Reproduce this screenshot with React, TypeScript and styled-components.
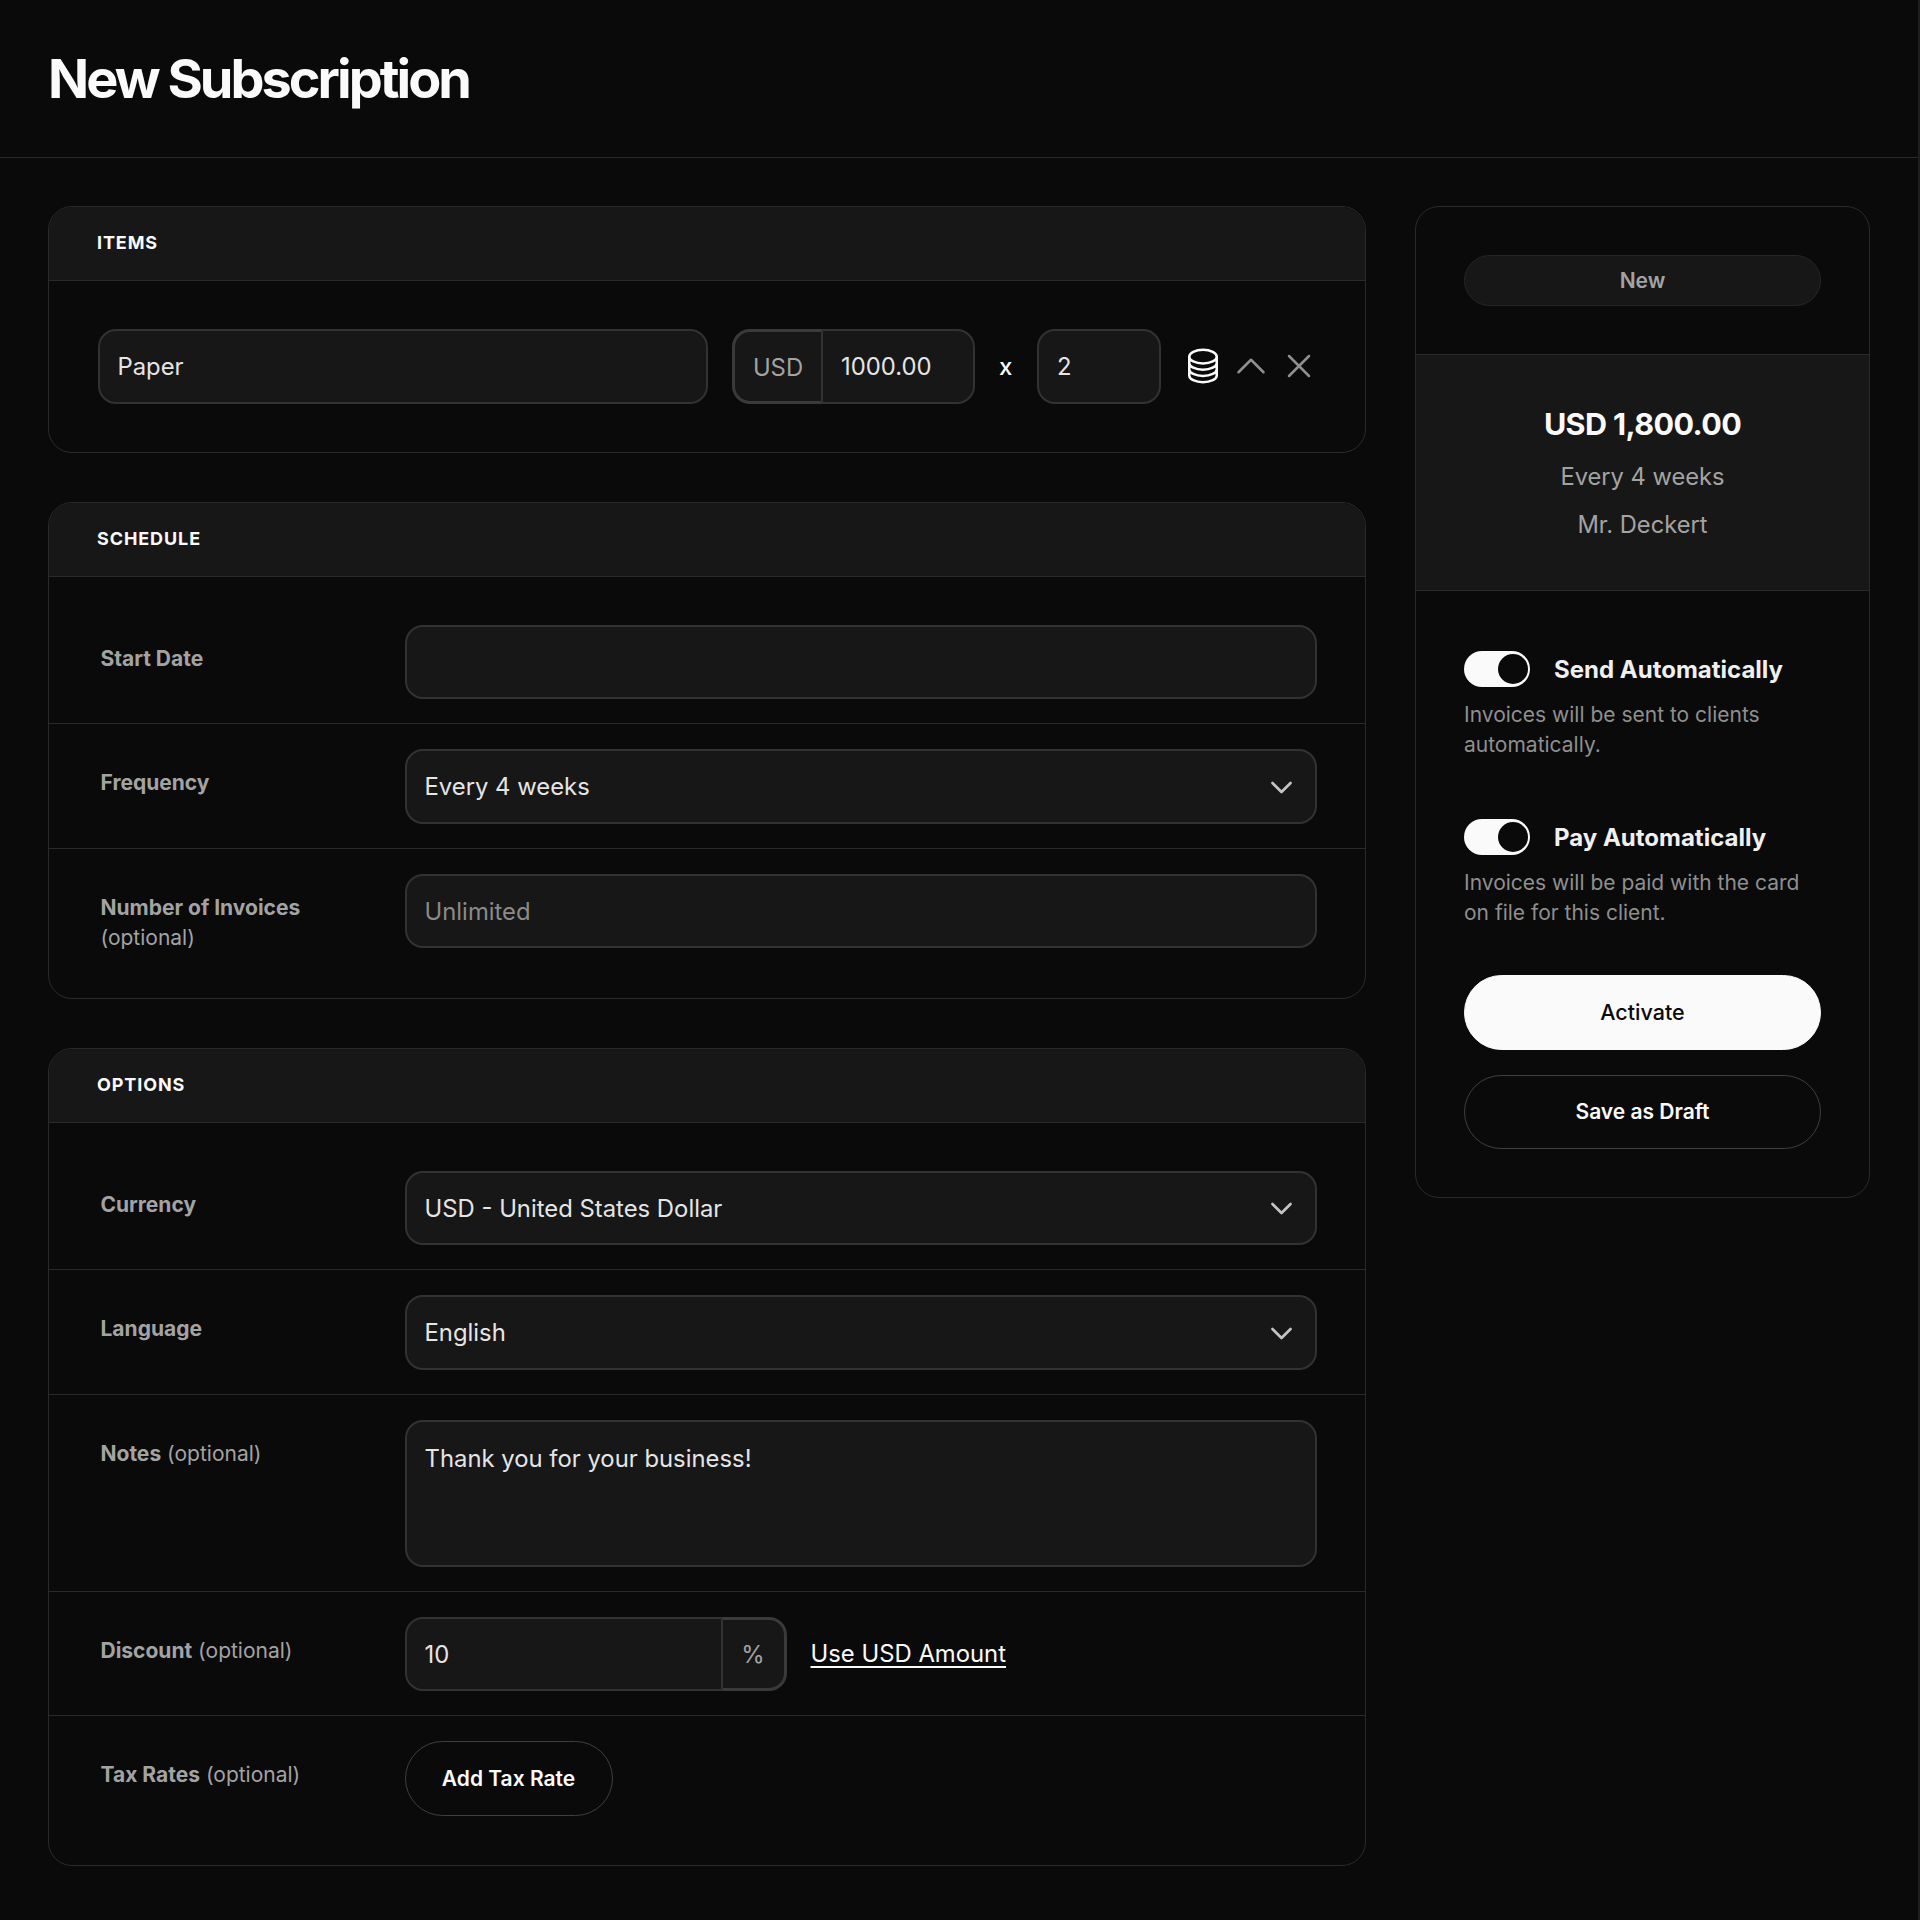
import { HiOutlineChevronDown, HiOutlineChevronUp, HiOutlineCircleStack, HiOutlineXMark } from 'react-icons/hi2';
import styled, { createGlobalStyle } from 'styled-components';

const GlobalStyle = createGlobalStyle`
  html, body {
    margin: 0;
    background: #0a0a0a;
    color: #fafafa;
    font-family: Inter, "Noto Sans", sans-serif;
  }
  * { box-sizing: border-box; }
`;

const Page = styled.div`
  min-height: 1920px;
  background: #0a0a0a;
  border-right: 2px solid #1e1e1e;
`;

const Header = styled.header`
  height: 158px;
  padding: 1px 0 0 48px;
  display: flex;
  align-items: center;
  border-bottom: 1px solid #2a2a2a;
`;

const Title = styled.h1`
  margin: 0;
  font-size: 54px;
  font-weight: 700;
  letter-spacing: -0.055em;
  line-height: 72px;
`;

const Layout = styled.div`
  display: grid;
  grid-template-columns: 1318px 455px;
  gap: 49px;
  padding: 48px 48px 48px;
  align-items: start;
`;

const Column = styled.main`
  display: flex;
  flex-direction: column;
  gap: 49px;
`;

const Card = styled.section`
  border: 1px solid #2a2a2a;
  border-radius: 24px;
  overflow: hidden;
`;

const CardHead = styled.div`
  height: 74px;
  padding: 0 0 2px 48px;
  display: flex;
  align-items: center;
  background: #171717;
  border-bottom: 1px solid #2a2a2a;
  font-size: 18px;
  font-weight: 700;
  letter-spacing: 0.05em;
`;

const ItemRow = styled.div`
  display: flex;
  align-items: center;
  gap: 24px;
  padding: 48px 48px 48px 48.5px;
`;

const Field = styled.div<{ $width?: number; $height?: number; $flat?: 'left' | 'right'; $top?: boolean }>`
  ${({ $width }) => ($width ? `width: ${$width}px; flex: none;` : 'flex: 1;')}
  height: ${({ $height }) => $height ?? 74.5}px;
  padding: ${({ $top }) => ($top ? '19px' : '1.5px')} 18px 0;
  display: flex;
  align-items: ${({ $top }) => ($top ? 'flex-start' : 'center')};
  justify-content: space-between;
  background: #171717;
  border: 2px solid #323232;
  border-radius: ${({ $flat }) =>
    $flat === 'left' ? '0 18px 18px 0' : $flat === 'right' ? '18px 0 0 18px' : '18px'};
  font-size: 23.85px;
  line-height: 36px;
  color: #e5e5e5;
`;

const Placeholder = styled.span`
  color: #8a8a8a;
`;

const Addon = styled.div<{ $side: 'left' | 'right'; $width: number }>`
  width: ${({ $width }) => $width}px;
  height: 74.5px;
  flex: none;
  padding-top: 1.5px;
  display: flex;
  align-items: center;
  justify-content: center;
  background: #171717;
  border: 3px solid #3a3a3a;
  border-${({ $side }) => ($side === 'left' ? 'right' : 'left')}: 0;
  border-radius: ${({ $side }) => ($side === 'left' ? '18px 0 0 18px' : '0 18px 18px 0')};
  font-size: 23.85px;
  color: #a3a3a3;
`;

const Group = styled.div`
  display: flex;
  flex: none;
`;

const Times = styled.span`
  font-size: 24px;
  font-weight: 500;
  width: 14px;
`;

const Icons = styled.div`
  display: flex;
  gap: 12px;
`;

const IconButton = styled.span<{ $bright?: boolean }>`
  width: 36px;
  height: 36px;
  display: flex;
  align-items: center;
  justify-content: center;
  color: ${({ $bright }) => ($bright ? '#fafafa' : '#8f8f8f')};
  font-size: 40px;
  svg {
    flex: none;
  }
`;

const SelectArrow = styled.span`
  width: 32px;
  height: 32px;
  display: flex;
  align-items: center;
  justify-content: center;
  color: #c4c4c4;
  font-size: 29px;
  svg {
    stroke-width: 2.2;
  }
`;

const Rows = styled.div`
  display: flex;
  flex-direction: column;
`;

const Row = styled.div<{ $first?: boolean; $last?: boolean }>`
  display: grid;
  grid-template-columns: 304px 1fr;
  align-items: start;
  padding: ${({ $first }) => ($first ? '48px' : '25px')} 48px ${({ $last }) => ($last ? '49.5px' : '24px')} 51.5px;
  border-bottom: ${({ $last }) => ($last ? '0' : '1px solid #2a2a2a')};
`;

const Label = styled.div`
  margin-bottom: -6px;
  padding-top: 19px;
  font-size: 21px;
  line-height: 30px;
  font-weight: 400;
  color: #a3a3a3;
  strong {
    font-weight: 700;
  }
`;

const Inline = styled.div`
  display: flex;
  align-items: center;
`;

const Link = styled.a`
  margin-left: 24px;
  font-size: 23.85px;
  line-height: 30px;
  color: #fafafa;
  text-decoration: underline;
  text-underline-offset: 4px;
`;

const GhostButton = styled.button<{ $wide?: boolean }>`
  ${({ $wide }) => ($wide ? 'width: 100%;' : 'width: 208px;')}
  height: 74.5px;
  background: transparent;
  border: 1px solid #404040;
  border-radius: 38px;
  color: #fafafa;
  font: 600 21px Inter, sans-serif;
`;

const PrimaryButton = styled(GhostButton)`
  width: 100%;
  background: #fafafa;
  border-color: #fafafa;
  color: #0a0a0a;
  font: 500 21.5px Inter, sans-serif;
`;

const Side = styled.aside`
  border: 1px solid #2a2a2a;
  border-radius: 24px;
  overflow: hidden;
`;

const StatusBar = styled.div`
  padding: 48px;
`;

const Status = styled.div`
  height: 51px;
  display: flex;
  align-items: center;
  justify-content: center;
  background: #171717;
  border: 1px solid #262626;
  border-radius: 26px;
  font-size: 21px;
  font-weight: 600;
  color: #a3a3a3;
`;

const Summary = styled.div`
  height: 237px;
  padding-top: 4.5px;
  display: flex;
  flex-direction: column;
  align-items: center;
  justify-content: center;
  background: #171717;
  border-top: 1px solid #2a2a2a;
  border-bottom: 1px solid #2a2a2a;
`;

const Amount = styled.div`
  margin-bottom: 5px;
  font-size: 30.5px;
  font-weight: 700;
  line-height: 48px;
  letter-spacing: -0.02em;
`;

const SummaryLine = styled.div`
  font-size: 23.7px;
  line-height: 48px;
  color: #a3a3a3;
`;

const Controls = styled.div`
  padding: 48px;
  display: flex;
  flex-direction: column;
`;

const Setting = styled.div`
  margin-bottom: 47px;
`;

const SettingHead = styled.div`
  height: 60px;
  display: flex;
  align-items: center;
  gap: 24px;
  font-size: 24px;
  font-weight: 700;
  color: #f0f0f0;
`;

const Toggle = styled.span`
  width: 66px;
  height: 36px;
  padding: 3px 2px 3px 3px;
  display: flex;
  justify-content: flex-end;
  background: #fafafa;
  border-radius: 18px;
`;

const Knob = styled.span`
  width: 30px;
  height: 30px;
  background: #0a0a0a;
  border-radius: 50%;
`;

const Hint = styled.p`
  margin: 0;
  padding-top: 1px;
  font-size: 21px;
  line-height: 30px;
  color: #8f8f8f;
`;

const Gap = styled.div`
  height: 25px;
`;

function Chevron() {
  return (
    <SelectArrow>
      <HiOutlineChevronDown />
    </SelectArrow>
  );
}

export default function App() {
  return (
    <Page>
      <GlobalStyle />
      <Header>
        <Title>New Subscription</Title>
      </Header>
      <Layout>
        <Column>
          <Card>
            <CardHead>ITEMS</CardHead>
            <ItemRow>
              <Field>Paper</Field>
              <Group>
                <Addon $side="left" $width={89}>USD</Addon>
                <Field $width={154} $flat="left">1000.00</Field>
              </Group>
              <Times>x</Times>
              <Field $width={124}>2</Field>
              <Icons>
                <IconButton $bright><HiOutlineCircleStack /></IconButton>
                <IconButton><HiOutlineChevronUp /></IconButton>
                <IconButton><HiOutlineXMark /></IconButton>
              </Icons>
            </ItemRow>
          </Card>

          <Card>
            <CardHead>SCHEDULE</CardHead>
            <Rows>
              <Row $first>
                <Label><strong>Start Date</strong></Label>
                <Field />
              </Row>
              <Row>
                <Label><strong>Frequency</strong></Label>
                <Field>Every 4 weeks<Chevron /></Field>
              </Row>
              <Row $last>
                <Label><strong>Number of Invoices</strong><br />(optional)</Label>
                <Field><Placeholder>Unlimited</Placeholder></Field>
              </Row>
            </Rows>
          </Card>

          <Card>
            <CardHead>OPTIONS</CardHead>
            <Rows>
              <Row $first>
                <Label><strong>Currency</strong></Label>
                <Field>USD - United States Dollar<Chevron /></Field>
              </Row>
              <Row>
                <Label><strong>Language</strong></Label>
                <Field>English<Chevron /></Field>
              </Row>
              <Row>
                <Label><strong>Notes</strong> (optional)</Label>
                <Field $height={147} $top>Thank you for your business!</Field>
              </Row>
              <Row>
                <Label><strong>Discount</strong> (optional)</Label>
                <Inline>
                  <Field $width={318} $flat="right">10</Field>
                  <Addon $side="right" $width={64}>%</Addon>
                  <Link>Use USD Amount</Link>
                </Inline>
              </Row>
              <Row $last>
                <Label><strong>Tax Rates</strong> (optional)</Label>
                <Inline>
                  <GhostButton>Add Tax Rate</GhostButton>
                </Inline>
              </Row>
            </Rows>
          </Card>
        </Column>

        <Side>
          <StatusBar>
            <Status>New</Status>
          </StatusBar>
          <Summary>
            <Amount>USD 1,800.00</Amount>
            <SummaryLine>Every 4 weeks</SummaryLine>
            <SummaryLine>Mr. Deckert</SummaryLine>
          </Summary>
          <Controls>
            <Setting>
              <SettingHead><Toggle><Knob /></Toggle>Send Automatically</SettingHead>
              <Hint>Invoices will be sent to clients automatically.</Hint>
            </Setting>
            <Setting>
              <SettingHead><Toggle><Knob /></Toggle>Pay Automatically</SettingHead>
              <Hint>Invoices will be paid with the card on file for this client.</Hint>
            </Setting>
            <PrimaryButton>Activate</PrimaryButton>
            <Gap />
            <GhostButton $wide>Save as Draft</GhostButton>
          </Controls>
        </Side>
      </Layout>
    </Page>
  );
}
